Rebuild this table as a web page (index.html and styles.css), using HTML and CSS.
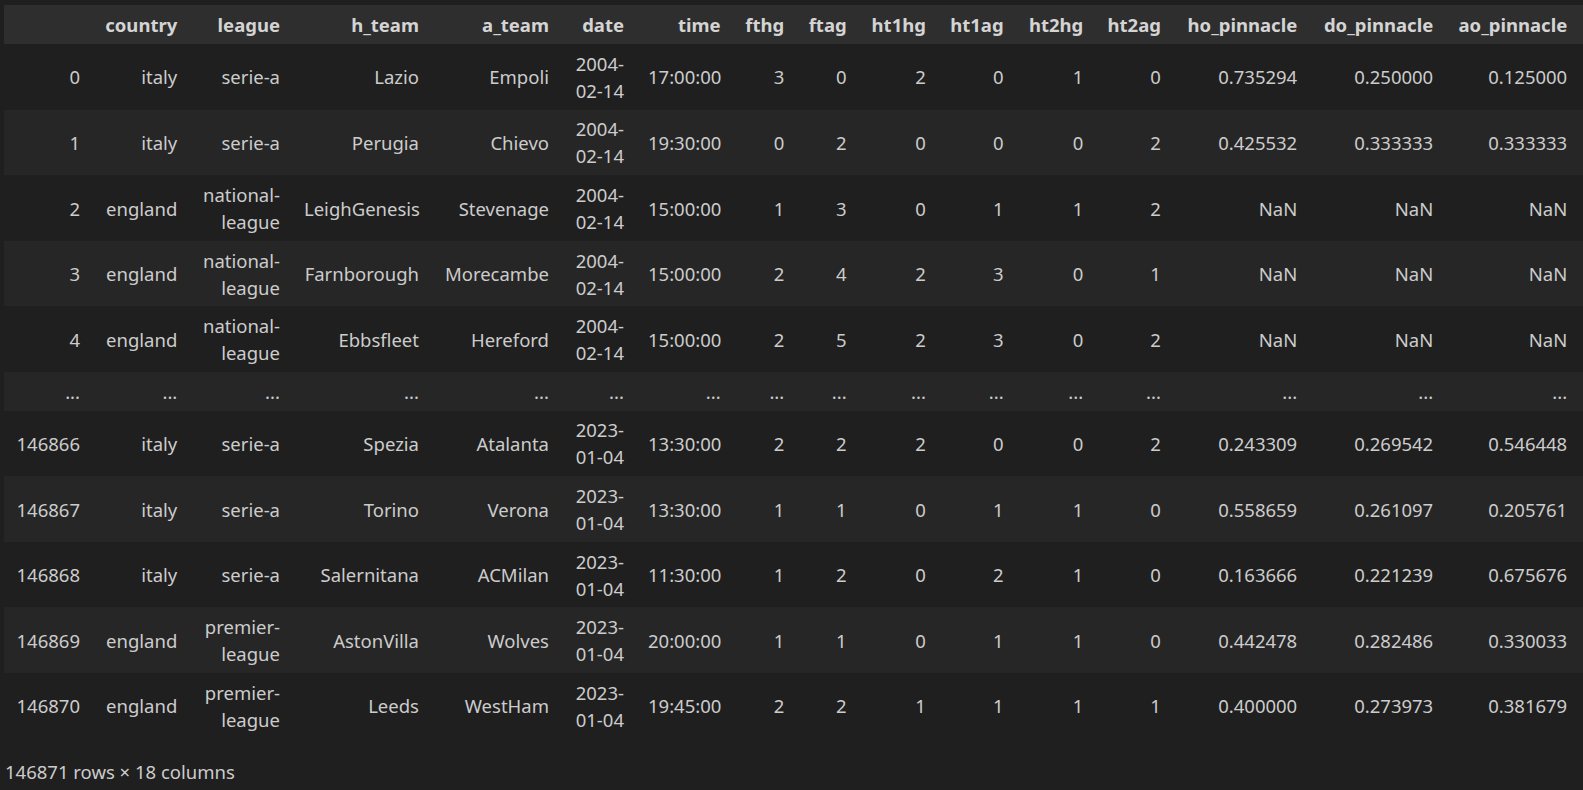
FILE: index.html
```html
<!DOCTYPE html>
<html>
<head>
<meta charset="utf-8">
<link rel="stylesheet" href="styles.css">
</head>
<body>
<div class="output">
<table class="dataframe">
<colgroup>
<col class="c-idx"><col class="c-country"><col class="c-league"><col class="c-hteam"><col class="c-ateam"><col class="c-date"><col class="c-time"><col class="c-fthg"><col class="c-ftag"><col class="c-ht1hg"><col class="c-ht1ag"><col class="c-ht2hg"><col class="c-ht2ag"><col class="c-ho"><col class="c-do"><col class="c-ao">
</colgroup>
<thead>
<tr><th></th><th>country</th><th>league</th><th>h_team</th><th>a_team</th><th>date</th><th>time</th><th>fthg</th><th>ftag</th><th>ht1hg</th><th>ht1ag</th><th>ht2hg</th><th>ht2ag</th><th>ho_pinnacle</th><th>do_pinnacle</th><th>ao_pinnacle</th></tr>
</thead>
<tbody>
<tr><td>0</td><td>italy</td><td>serie-a</td><td>Lazio</td><td>Empoli</td><td>2004-<wbr>02-14</td><td>17:00:00</td><td>3</td><td>0</td><td>2</td><td>0</td><td>1</td><td>0</td><td>0.735294</td><td>0.250000</td><td>0.125000</td></tr>
<tr><td>1</td><td>italy</td><td>serie-a</td><td>Perugia</td><td>Chievo</td><td>2004-<wbr>02-14</td><td>19:30:00</td><td>0</td><td>2</td><td>0</td><td>0</td><td>0</td><td>2</td><td>0.425532</td><td>0.333333</td><td>0.333333</td></tr>
<tr><td>2</td><td>england</td><td>national-<wbr>league</td><td>LeighGenesis</td><td>Stevenage</td><td>2004-<wbr>02-14</td><td>15:00:00</td><td>1</td><td>3</td><td>0</td><td>1</td><td>1</td><td>2</td><td>NaN</td><td>NaN</td><td>NaN</td></tr>
<tr><td>3</td><td>england</td><td>national-<wbr>league</td><td>Farnborough</td><td>Morecambe</td><td>2004-<wbr>02-14</td><td>15:00:00</td><td>2</td><td>4</td><td>2</td><td>3</td><td>0</td><td>1</td><td>NaN</td><td>NaN</td><td>NaN</td></tr>
<tr><td>4</td><td>england</td><td>national-<wbr>league</td><td>Ebbsfleet</td><td>Hereford</td><td>2004-<wbr>02-14</td><td>15:00:00</td><td>2</td><td>5</td><td>2</td><td>3</td><td>0</td><td>2</td><td>NaN</td><td>NaN</td><td>NaN</td></tr>
<tr class="ellipsis"><td>...</td><td>...</td><td>...</td><td>...</td><td>...</td><td>...</td><td>...</td><td>...</td><td>...</td><td>...</td><td>...</td><td>...</td><td>...</td><td>...</td><td>...</td><td>...</td></tr>
<tr><td>146866</td><td>italy</td><td>serie-a</td><td>Spezia</td><td>Atalanta</td><td>2023-<wbr>01-04</td><td>13:30:00</td><td>2</td><td>2</td><td>2</td><td>0</td><td>0</td><td>2</td><td>0.243309</td><td>0.269542</td><td>0.546448</td></tr>
<tr><td>146867</td><td>italy</td><td>serie-a</td><td>Torino</td><td>Verona</td><td>2023-<wbr>01-04</td><td>13:30:00</td><td>1</td><td>1</td><td>0</td><td>1</td><td>1</td><td>0</td><td>0.558659</td><td>0.261097</td><td>0.205761</td></tr>
<tr><td>146868</td><td>italy</td><td>serie-a</td><td>Salernitana</td><td>ACMilan</td><td>2023-<wbr>01-04</td><td>11:30:00</td><td>1</td><td>2</td><td>0</td><td>2</td><td>1</td><td>0</td><td>0.163666</td><td>0.221239</td><td>0.675676</td></tr>
<tr><td>146869</td><td>england</td><td>premier-<wbr>league</td><td>AstonVilla</td><td>Wolves</td><td>2023-<wbr>01-04</td><td>20:00:00</td><td>1</td><td>1</td><td>0</td><td>1</td><td>1</td><td>0</td><td>0.442478</td><td>0.282486</td><td>0.330033</td></tr>
<tr><td>146870</td><td>england</td><td>premier-<wbr>league</td><td>Leeds</td><td>WestHam</td><td>2023-<wbr>01-04</td><td>19:45:00</td><td>2</td><td>2</td><td>1</td><td>1</td><td>1</td><td>1</td><td>0.400000</td><td>0.273973</td><td>0.381679</td></tr>
</tbody>
</table>
<p class="shape">146871 rows × 18 columns</p>
</div>
</body>
</html>
```

FILE: styles.css
```css
html, body {
  background: #1f1f1f;
}
body {
  margin: 5px 0 0 4px;
  color: #cccccc;
  font-family: "Noto Sans", "Open Sans", sans-serif;
  font-size: 18.5px;
  line-height: 27px;
  overflow: hidden;
}
.output {
  display: block;
}
.dataframe {
  table-layout: fixed;
  border-collapse: collapse;
  border-spacing: 0;
  width: 1579px;
}
.dataframe th,
.dataframe td {
  padding: 5.8px 12px;
  text-align: right;
  vertical-align: middle;
  overflow: visible;
}
.dataframe th {
  padding-top: 6.3px;
  padding-bottom: 5.8px;
}
.dataframe th:last-child,
.dataframe td:last-child {
  padding-right: 16px;
}
.dataframe thead tr {
  background: #2e2e2e;
}
.dataframe th {
  font-weight: 700;
  color: #d4d4d4;
}
.dataframe tbody tr:nth-child(even) {
  background: #262626;
}
.c-idx { width: 88px; }
.c-country { width: 97.3px; }
.c-league { width: 102.7px; }
.c-hteam { width: 139px; }
.c-ateam { width: 130px; }
.c-date { width: 75px; }
.c-time { width: 96.7px; }
.c-fthg { width: 63.6px; }
.c-ftag { width: 62.4px; }
.c-ht1hg { width: 79.3px; }
.c-ht1ag { width: 77.7px; }
.c-ht2hg { width: 79.6px; }
.c-ht2ag { width: 77.7px; }
.c-ho { width: 136.3px; }
.c-do { width: 136px; }
.c-ao { width: 138px; }
.shape {
  margin: 19px 0 0 1px;
}
```
